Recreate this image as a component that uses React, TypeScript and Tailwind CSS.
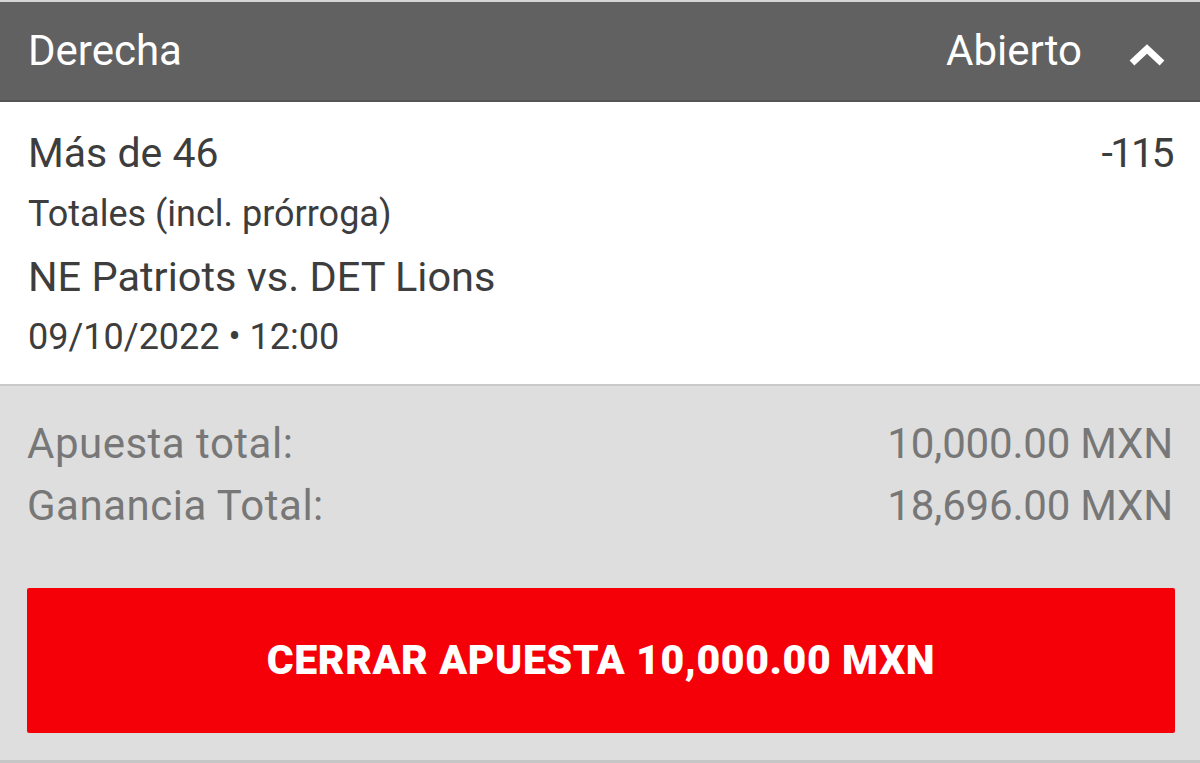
export default function App() {
  return (
    <div className="h-[763px] w-[1200px] overflow-hidden bg-[#dedede] font-['Roboto',sans-serif]">
      <div className="h-[2px] bg-[#d6d6d6]" />
      <header className="flex h-[100px] items-center justify-between border-b-2 border-[#555555] bg-[#616161] pl-[28px] pr-[34px] text-white">
        <span className="text-[42px] leading-[50px]">Derecha</span>
        <div className="flex items-center gap-[46px]">
          <span className="text-[42px] leading-[50px]">Abierto</span>
          <svg width="38" height="24" viewBox="0 0 38 24" className="mt-[8px]">
            <path d="M4 20 L19 6 L34 20" fill="none" stroke="white" strokeWidth="7" strokeLinejoin="miter" />
          </svg>
        </div>
      </header>

      <section className="border-b-2 border-[#c9c9c9] bg-white px-[28px] pt-[27px] pb-[26px] text-[#3d3d3d]">
        <div className="flex items-start justify-between">
          <span className="text-[41px] leading-[48px]">Más de 46</span>
          <span className="text-[41px] leading-[48px] tracking-[-2.5px]">-115</span>
        </div>
        <div className="mt-[16px] text-[36px] leading-[42px]">Totales (incl. prórroga)</div>
        <div className="mt-[18px] text-[41.5px] leading-[48px]">NE Patriots vs. DET Lions</div>
        <div className="mt-[15px] text-[36px] leading-[42px]">09/10/2022 • 12:00</div>
      </section>

      <section className="pl-[27px] pr-[25px] pt-[33px] text-[#777777]">
        <div className="flex justify-between pr-[2px] text-[42px] leading-[50px]">
          <span className="tracking-[0.5px]">Apuesta total:</span>
          <span className="tracking-[-0.2px]">10,000.00 MXN</span>
        </div>
        <div className="mt-[12px] flex justify-between pr-[2px] text-[42px] leading-[50px]">
          <span className="tracking-[0.5px]">Ganancia Total:</span>
          <span className="tracking-[-0.2px]">18,696.00 MXN</span>
        </div>
        <button
          type="button"
          className="mt-[57px] flex h-[145px] w-full items-center justify-center rounded-[2px] bg-[#f50008] text-[41px] font-black tracking-[0.6px] text-white"
        >
          CERRAR APUESTA 10,000.00 MXN
        </button>
      </section>
      <div className="mt-[27px] h-[3px] bg-[#c6c6c6]" />
    </div>
  );
}
